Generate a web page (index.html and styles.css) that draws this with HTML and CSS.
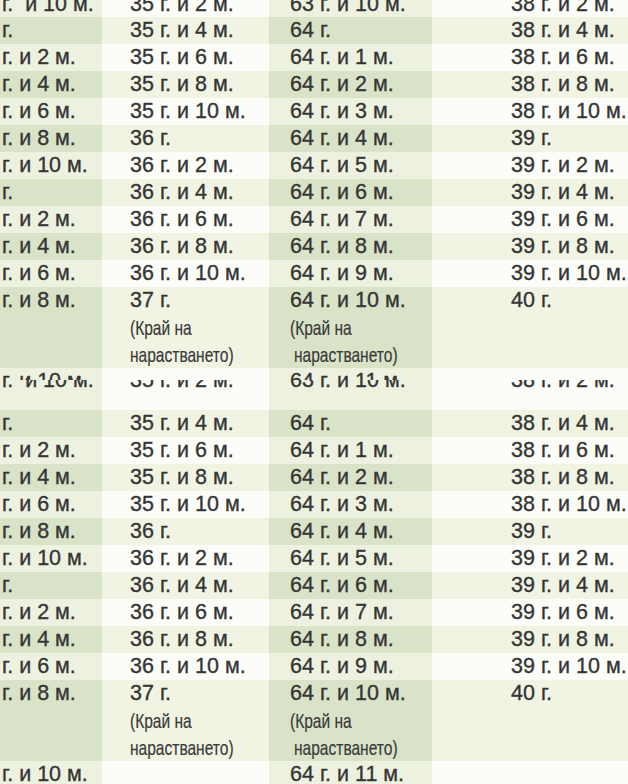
FILE: index.html
```html
<!DOCTYPE html>
<html lang="bg">
<head>
<meta charset="utf-8">
<title>Таблица</title>
<link rel="stylesheet" href="styles.css">
</head>
<body>
<div class="tile tile-top">
  <div class="row odd cut"><div class="c c1"><span>г.&nbsp; и 10 м.</span></div><div class="c c2"><span>35 г. и 2 м.</span></div><div class="c c3"><span>63 г. и 10 м.</span></div><div class="c c4"><span>38 г. и 2 м.</span></div></div>
  <div class="row even"><div class="c c1">г.</div><div class="c c2">35 г. и 4 м.</div><div class="c c3">64 г.</div><div class="c c4">38 г. и 4 м.</div></div>
  <div class="row odd"><div class="c c1">г. и 2 м.</div><div class="c c2">35 г. и 6 м.</div><div class="c c3">64 г. и 1 м.</div><div class="c c4">38 г. и 6 м.</div></div>
  <div class="row even"><div class="c c1">г. и 4 м.</div><div class="c c2">35 г. и 8 м.</div><div class="c c3">64 г. и 2 м.</div><div class="c c4">38 г. и 8 м.</div></div>
  <div class="row odd"><div class="c c1">г. и 6 м.</div><div class="c c2">35 г. и 10 м.</div><div class="c c3">64 г. и 3 м.</div><div class="c c4">38 г. и 10 м.</div></div>
  <div class="row even"><div class="c c1">г. и 8 м.</div><div class="c c2">36 г.</div><div class="c c3">64 г. и 4 м.</div><div class="c c4">39 г.</div></div>
  <div class="row odd"><div class="c c1">г. и 10 м.</div><div class="c c2">36 г. и 2 м.</div><div class="c c3">64 г. и 5 м.</div><div class="c c4">39 г. и 2 м.</div></div>
  <div class="row even"><div class="c c1">г.</div><div class="c c2">36 г. и 4 м.</div><div class="c c3">64 г. и 6 м.</div><div class="c c4">39 г. и 4 м.</div></div>
  <div class="row odd"><div class="c c1">г. и 2 м.</div><div class="c c2">36 г. и 6 м.</div><div class="c c3">64 г. и 7 м.</div><div class="c c4">39 г. и 6 м.</div></div>
  <div class="row even"><div class="c c1">г. и 4 м.</div><div class="c c2">36 г. и 8 м.</div><div class="c c3">64 г. и 8 м.</div><div class="c c4">39 г. и 8 м.</div></div>
  <div class="row odd"><div class="c c1">г. и 6 м.</div><div class="c c2">36 г. и 10 м.</div><div class="c c3">64 г. и 9 м.</div><div class="c c4">39 г. и 10 м.</div></div>
  <div class="row even tall"><div class="c c1">г. и 8 м.</div><div class="c c2"><div>37 г.</div><div class="note"><span>(Край на</span></div><div class="note"><span>нарастването)</span></div></div><div class="c c3"><div>64 г. и 10 м.</div><div class="note"><span>(Край на</span></div><div class="note shift"><span>нарастването)</span></div></div><div class="c c4">40 г.</div></div>
  <div class="row odd"><div class="c c1">г. и 10 м.</div><div class="c c2"></div><div class="c c3">64 г. и 11 м.</div><div class="c c4"></div></div>
</div>
<div class="tile tile-bottom">
  <div class="row odd cut"><div class="c c1"><span>г.&nbsp; и 10 м.</span></div><div class="c c2"><span>35 г. и 2 м.</span></div><div class="c c3"><span>63 г. и 10 м.</span></div><div class="c c4"><span>38 г. и 2 м.</span></div></div>
  <div class="row even"><div class="c c1">г.</div><div class="c c2">35 г. и 4 м.</div><div class="c c3">64 г.</div><div class="c c4">38 г. и 4 м.</div></div>
  <div class="row odd"><div class="c c1">г. и 2 м.</div><div class="c c2">35 г. и 6 м.</div><div class="c c3">64 г. и 1 м.</div><div class="c c4">38 г. и 6 м.</div></div>
  <div class="row even"><div class="c c1">г. и 4 м.</div><div class="c c2">35 г. и 8 м.</div><div class="c c3">64 г. и 2 м.</div><div class="c c4">38 г. и 8 м.</div></div>
  <div class="row odd"><div class="c c1">г. и 6 м.</div><div class="c c2">35 г. и 10 м.</div><div class="c c3">64 г. и 3 м.</div><div class="c c4">38 г. и 10 м.</div></div>
  <div class="row even"><div class="c c1">г. и 8 м.</div><div class="c c2">36 г.</div><div class="c c3">64 г. и 4 м.</div><div class="c c4">39 г.</div></div>
  <div class="row odd"><div class="c c1">г. и 10 м.</div><div class="c c2">36 г. и 2 м.</div><div class="c c3">64 г. и 5 м.</div><div class="c c4">39 г. и 2 м.</div></div>
  <div class="row even"><div class="c c1">г.</div><div class="c c2">36 г. и 4 м.</div><div class="c c3">64 г. и 6 м.</div><div class="c c4">39 г. и 4 м.</div></div>
  <div class="row odd"><div class="c c1">г. и 2 м.</div><div class="c c2">36 г. и 6 м.</div><div class="c c3">64 г. и 7 м.</div><div class="c c4">39 г. и 6 м.</div></div>
  <div class="row even"><div class="c c1">г. и 4 м.</div><div class="c c2">36 г. и 8 м.</div><div class="c c3">64 г. и 8 м.</div><div class="c c4">39 г. и 8 м.</div></div>
  <div class="row odd"><div class="c c1">г. и 6 м.</div><div class="c c2">36 г. и 10 м.</div><div class="c c3">64 г. и 9 м.</div><div class="c c4">39 г. и 10 м.</div></div>
  <div class="row even tall"><div class="c c1">г. и 8 м.</div><div class="c c2"><div>37 г.</div><div class="note"><span>(Край на</span></div><div class="note"><span>нарастването)</span></div></div><div class="c c3"><div>64 г. и 10 м.</div><div class="note"><span>(Край на</span></div><div class="note shift"><span>нарастването)</span></div></div><div class="c c4">40 г.</div></div>
  <div class="row odd"><div class="c c1">г. и 10 м.</div><div class="c c2"></div><div class="c c3">64 г. и 11 м.</div><div class="c c4"></div></div>
</div>
</body>
</html>
```

FILE: styles.css
```css
html, body {
  margin: 0;
  padding: 0;
  background: #ffffff;
}
body {
  width: 628px;
  font-family: "Liberation Sans", Arial, sans-serif;
  font-size: 21.5px;
  color: #353535;
  -webkit-text-stroke: 0.35px #353535;
  overflow: hidden;
}
.tile {
  overflow: hidden;
  width: 628px;
}
.tile-top {
  height: 380px;
}
.tile-bottom {
  height: 404px;
}
.row {
  display: grid;
  grid-template-columns: 102px 167px 163px 196px;
  height: 27px;
  line-height: 27px;
  white-space: nowrap;
}
.row.tall {
  height: 81px;
}
.c {
  overflow: hidden;
}
.c1 { padding-left: 2px; }
.c2 { padding-left: 28px; }
.c3 { padding-left: 21px; }
.c4 { padding-left: 79px; }

.odd .c1, .odd .c3 { background: #edf1df; }
.even .c1, .even .c3 { background: #d9e3c7; }
.odd .c2, .odd .c4 { background: #fcfdf8; }
.even .c2, .even .c4 { background: #f1f4e2; }

.tile-top .cut { height: 16.5px; }
.tile-top .cut .c > span { display: block; margin-top: -9px; }
.tile-bottom .cut { height: 29.5px; }
.tile-bottom .cut .c > span { display: block; margin-top: -13px; }

.note {
  font-size: 21px;
  color: #3a3a3a;
  -webkit-text-stroke: 0.2px #3a3a3a;
}
.note > span {
  display: inline-block;
  transform: scaleX(0.74);
  transform-origin: 0 50%;
}
.note.shift { padding-left: 4px; }
```
